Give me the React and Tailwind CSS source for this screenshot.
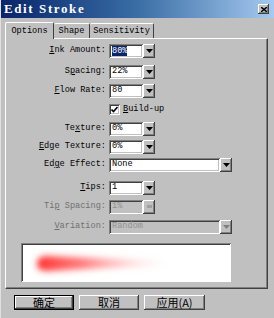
import React from 'react';

const raised =
  'shadow-[inset_-1px_-1px_#404040,inset_1px_1px_#ffffff,inset_-2px_-2px_#808080]';
const sunken =
  'shadow-[inset_1px_1px_#808080,inset_-1px_-1px_#ffffff,inset_2px_2px_#404040,inset_-2px_-2px_#c0c0c0]';

function Arrow({ disabled, glyph }) {
  return (
    <div className={`w-[12px] h-[14px] bg-[#c0c0c0] flex items-center justify-center ${raised}`}>
      {glyph === 'eq' ? (
        <div className="w-[5px] h-[3px] bg-[#a0a0a0]" />
      ) : (
        <svg width="7" height="4" viewBox="0 0 7 4">
          <path d="M0 0h7L3.5 4z" fill={disabled ? '#808080' : '#000'} />
        </svg>
      )}
    </div>
  );
}

function Field({ value, width = 'w-[34px]', disabled, selected, glyph }) {
  return (
    <div className="flex items-center">
      <div
        className={`${width} h-[14px] flex items-center pl-[3px] ${sunken} ${
          disabled ? 'bg-[#c0c0c0] text-[#909090]' : 'bg-white text-black'
        }`}
      >
        <span className={selected ? 'bg-[#0a246a] text-white leading-[10px]' : ''}>{value}</span>
      </div>
      <Arrow disabled={disabled} glyph={glyph} />
    </div>
  );
}

function Label({ children, disabled }) {
  return (
    <div className={`w-[103px] text-right pr-[3px] ${disabled ? 'text-[#707070]' : 'text-black'}`}>
      {children}
    </div>
  );
}

function Row({ label, children, className = '' }) {
  return (
    <div className={`flex items-center h-[19px] ${className}`}>
      {label}
      {children}
    </div>
  );
}

export default function App() {
  return (
    <div className="w-[274px] h-[318px] bg-[#c0c0c0] overflow-hidden font-['Liberation_Mono',monospace] text-[8.6px] border-l border-[#e0e0e0]">
      {/* title bar */}
      <div className="h-[18px] flex items-center justify-between pl-[3px] pr-[5px] bg-gradient-to-r from-[#0a246a] via-[#3a6ea5] to-[#a6caf0]">
        <span className="text-white font-bold text-[13px] font-['Liberation_Serif',serif] tracking-[1.6px]">
          Edit Stroke
        </span>
        <div className={`w-[11px] h-[10px] bg-[#c0c0c0] flex items-center justify-center ${raised}`}>
          <svg width="6" height="5" viewBox="0 0 6 5">
            <path d="M0 0l6 5M6 0L0 5" stroke="#000" strokeWidth="1.4" />
          </svg>
        </div>
      </div>

      {/* tabs */}
      <div className="flex items-end h-[19px] pl-[4px] mt-[1px]">
        <div className="relative z-10 h-[17px] w-[49px] flex items-center justify-center bg-[#c0c0c0] border-t border-l border-white border-r border-r-[#404040] rounded-t-[2px] -mb-[1px]">
          Options
        </div>
        <div className="h-[15px] w-[36px] flex items-center justify-center border-t border-white border-r border-r-[#404040] rounded-t-[2px]">
          Shape
        </div>
        <div className="h-[15px] w-[64px] flex items-center justify-center border-t border-white border-r border-r-[#404040] rounded-t-[2px]">
          Sensitivity
        </div>
      </div>

      {/* panel */}
      <div className="ml-[4px] w-[263px] h-[251px] border-t border-l border-white border-r border-b border-r-[#404040] border-b-[#404040] shadow-[inset_-1px_-1px_#808080] pt-[2px]">
        <Row label={<Label><u>I</u>nk Amount:</Label>}>
          <Field value="80%" selected />
        </Row>
        <Row label={<Label>S<u>p</u>acing:</Label>} className="mt-[2px]">
          <Field value="22%" />
        </Row>
        <Row label={<Label><u>F</u>low Rate:</Label>}>
          <Field value="80" />
        </Row>
        <Row label={<Label />}>
          <div className="flex items-center gap-[3px]">
            <div className={`w-[11px] h-[11px] bg-white flex items-center justify-center ${sunken}`}>
              <svg width="7" height="7" viewBox="0 0 7 7">
                <path d="M0.5 3.5l2 2 4-4.5" fill="none" stroke="#000" strokeWidth="1.6" />
              </svg>
            </div>
            <span><u>B</u>uild-up</span>
          </div>
        </Row>
        <Row label={<Label>Te<u>x</u>ture:</Label>}>
          <Field value="0%" />
        </Row>
        <Row label={<Label><u>E</u>dge Texture:</Label>} className="-mt-[1px]">
          <Field value="0%" />
        </Row>
        <Row label={<Label>Ed<u>g</u>e Effect:</Label>} className="-mt-[1px]">
          <Field value="None" width="w-[111px]" />
        </Row>
        <Row label={<Label><u>T</u>ips:</Label>} className="mt-[4px]">
          <Field value="1" />
        </Row>
        <Row label={<Label disabled>Ti<u>p</u> Spacing:</Label>}>
          <Field value="1%" disabled glyph="eq" />
        </Row>
        <Row label={<Label disabled><u>V</u>ariation:</Label>} className="mt-[1px]">
          <Field value="Random" width="w-[111px]" disabled />
        </Row>

        {/* preview */}
        <div className="ml-[15px] mt-[7px] w-[210px] h-[39px] bg-white shadow-[inset_1px_1px_#808080,inset_-1px_-1px_#ffffff,inset_2px_2px_#404040] overflow-hidden">
          <svg width="210" height="39" viewBox="0 0 210 39">
            <defs>
              <linearGradient id="ink" x1="0" x2="1" y1="0" y2="0">
                <stop offset="0" stopColor="#ff3030" />
                <stop offset="0.35" stopColor="#ff6060" stopOpacity="0.8" />
                <stop offset="1" stopColor="#ffd0d0" stopOpacity="0" />
              </linearGradient>
              <filter id="blur" x="-20%" y="-100%" width="140%" height="300%">
                <feGaussianBlur stdDeviation="3" />
              </filter>
            </defs>
            <path
              d="M16 21c0-6 4-8 10-8L150 18v4L26 28c-6 0-10-2-10-7z"
              fill="url(#ink)"
              filter="url(#blur)"
            />
          </svg>
        </div>
      </div>

      {/* buttons */}
      <div className="flex gap-[5px] pl-[13px] mt-[6px] font-['Noto_Sans_CJK_SC',sans-serif] text-[11px]">
        <div className="w-[60px] h-[15px] border border-black flex items-center justify-center">
          <div className={`w-full h-full flex items-center justify-center ${raised}`}>确定</div>
        </div>
        <div className={`w-[60px] h-[15px] flex items-center justify-center ${raised}`}>取消</div>
        <div className={`w-[61px] h-[15px] flex items-center justify-center ${raised}`}>应用(A)</div>
      </div>
    </div>
  );
}
